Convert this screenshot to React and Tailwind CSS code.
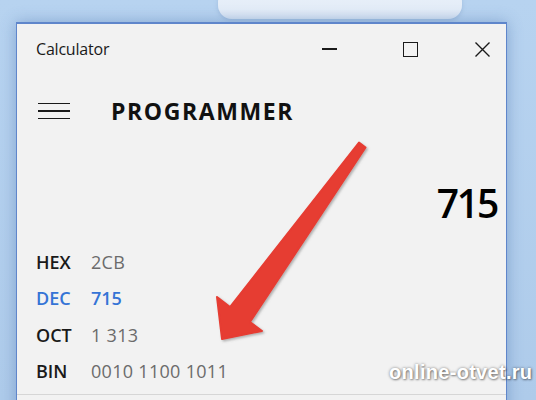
import React from "react";

export default function App() {
  const rows = [
    { l: "HEX", v: "2CB" },
    { l: "DEC", v: "715", active: true },
    { l: "OCT", v: "1 313" },
    { l: "BIN", v: "0010 1100 1011" },
  ];
  return (
    <div
      className="relative w-[536px] h-[400px] overflow-hidden bg-[linear-gradient(180deg,#b7d3f0_0%,#aecbea_100%)]"
      style={{ fontFamily: '"Open Sans", "Noto Sans", sans-serif' }}
    >
      {/* top blob */}
      <div className="absolute left-[218px] top-[-12px] w-[244px] h-[31px] rounded-[14px] bg-[linear-gradient(180deg,#eaf1fa_0%,#e3ecf7_70%,#d4e2f2_100%)] shadow-[0_2px_4px_rgba(120,150,190,0.35)]" />

      {/* window */}
      <div className="relative ml-[16px] mt-[22px] w-[491px] h-[400px] bg-[#f2f2f2] border-t-2 border-l border-r border-[#5f86cb] shadow-[0_0_14px_rgba(70,110,170,0.45)]">
        {/* title bar */}
        <div className="flex items-center h-[50px] text-[#1a1a1a]">
          <div className="pl-[19px] text-[16px] leading-none tracking-[-0.2px]">Calculator</div>
          <div className="ml-auto flex items-center">
            <div className="w-[15px] h-[1.5px] bg-[#1a1a1a]" />
            <div className="ml-[66px] w-[15px] h-[15px] border-[1.5px] border-[#1a1a1a]" />
            <svg className="ml-[57px] mr-[16px]" width="15" height="15" viewBox="0 0 15 15">
              <path d="M0.5 0.5 L14.5 14.5 M14.5 0.5 L0.5 14.5" stroke="#1a1a1a" strokeWidth="1.4" />
            </svg>
          </div>
        </div>

        {/* header row */}
        <div className="flex items-center h-[74px]">
          <div className="ml-[21px] flex flex-col gap-[6px] w-[32px]">
            <div className="h-[1.5px] bg-[#1a1a1a]" />
            <div className="h-[1.5px] bg-[#1a1a1a]" />
            <div className="h-[1.5px] bg-[#1a1a1a]" />
          </div>
          <div className="ml-[41px] text-[23px] font-bold tracking-[1.6px] text-[#111] leading-none">
            PROGRAMMER
          </div>
        </div>

        {/* display */}
        <div className="flex justify-end h-[96px] pt-[35px] pr-[9px]">
          <div className="text-[39px] font-semibold leading-none text-[#000] tracking-[-2.2px]">715</div>
        </div>

        {/* rows */}
        <div className="flex flex-col">
          {rows.map((r) => (
            <div key={r.l} className="flex items-center h-[36.5px] text-[18px]">
              <div
                className={
                  r.active
                    ? "pl-[19px] w-[74px] font-semibold text-[#3574d6]"
                    : "pl-[19px] w-[74px] font-semibold text-[#1a1a1a]"
                }
              >
                {r.l}
              </div>
              <div
                className={
                  r.active ? "font-semibold text-[#3574d6]" : "text-[#6b6b6b] tracking-[0.3px]"
                }
              >
                {r.v}
              </div>
            </div>
          ))}
        </div>
        <div className="mt-[4px] h-[1px] bg-[#d6d6d6]" />
      </div>

      {/* arrow */}
      <svg className="absolute left-0 top-0" width="536" height="400" viewBox="0 0 536 400">
        <defs>
          <filter id="sh" x="-20%" y="-20%" width="140%" height="140%">
            <feDropShadow dx="1.5" dy="1.5" stdDeviation="1" floodColor="#6b6b6b" floodOpacity="0.5" />
          </filter>
        </defs>
        <polygon
          points="359,142.5 365.5,147.5 250,322 262,331 222,339 217,297 230,307"
          fill="#e63c31"
          stroke="#e63c31"
          strokeWidth="2"
          strokeLinejoin="round"
          filter="url(#sh)"
        />
      </svg>

      {/* watermark */}
      <div
        className="absolute left-[389px] top-[362px] text-[20px] font-bold text-white tracking-[0.3px] leading-none [text-shadow:0_0_3px_rgba(0,0,0,0.45),1px_1px_2px_rgba(0,0,0,0.35)]"
        style={{ fontFamily: '"Liberation Sans", Arial, sans-serif' }}
      >
        online-otvet.ru
      </div>
    </div>
  );
}
